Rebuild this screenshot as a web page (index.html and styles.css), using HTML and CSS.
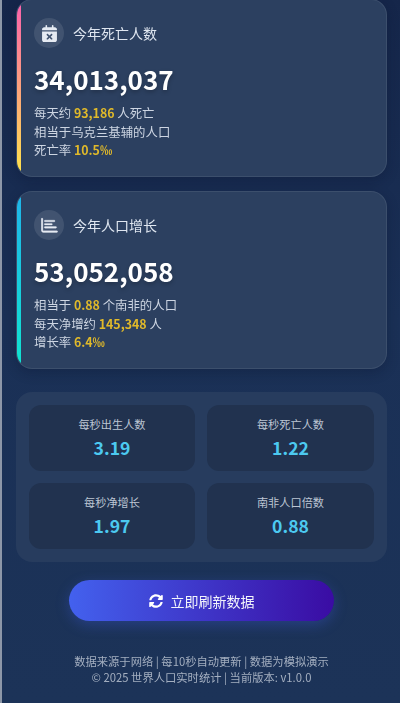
FILE: index.html
```html
<!DOCTYPE html>
<html lang="zh-CN">
<head>
<meta charset="utf-8">
<title>世界人口实时统计</title>
<link rel="stylesheet" href="styles.css">
</head>
<body>
<div class="edge"></div>
<main class="page">
  <section class="card card-death">
    <div class="card-head">
      <span class="icon-wrap">
        <svg class="icon" viewBox="0 0 448 512"><path d="M128 0c13 0 24 11 24 24v40h144V24c0-13 11-24 24-24s24 11 24 24v40h40c35 0 64 29 64 64v32H0v-32c0-35 29-64 64-64h40V24c0-13 11-24 24-24zM0 192h448v256c0 35-29 64-64 64H64c-35 0-64-29-64-64V192zm305 79c-9-9-25-9-34 0l-47 47-47-47c-9-9-25-9-34 0s-9 25 0 34l47 47-47 47c-9 9-9 25 0 34s25 9 34 0l47-47 47 47c9 9 25 9 34 0s9-25 0-34l-47-47 47-47c9-9 9-25 0-34z"/></svg>
      </span>
      <h2 class="card-title">今年死亡人数</h2>
    </div>
    <div class="big-number">34,013,037</div>
    <div class="details">
      <p>每天约 <b>93,186</b> 人死亡</p>
      <p>相当于乌克兰基辅的人口</p>
      <p>死亡率 <b>10.5‰</b></p>
    </div>
  </section>

  <section class="card card-growth">
    <div class="card-head">
      <span class="icon-wrap">
        <svg class="icon icon-chart" viewBox="0 0 512 512"><path d="M32 32c13 0 24 11 24 24v344c0 9 7 16 16 16h408c13 0 24 11 24 24s-11 24-24 24H72c-35 0-64-29-64-64V56c0-13 11-24 24-24zM120 96h280c13 0 24 11 24 24s-11 24-24 24H120c-13 0-24-11-24-24s11-24 24-24zm0 96h200c13 0 24 11 24 24s-11 24-24 24H120c-13 0-24-11-24-24s11-24 24-24zm0 96h328c13 0 24 11 24 24s-11 24-24 24H120c-13 0-24-11-24-24s11-24 24-24z"/></svg>
      </span>
      <h2 class="card-title">今年人口增长</h2>
    </div>
    <div class="big-number">53,052,058</div>
    <div class="details">
      <p>相当于 <b>0.88</b> 个南非的人口</p>
      <p>每天净增约 <b>145,348</b> 人</p>
      <p>增长率 <b>6.4‰</b></p>
    </div>
  </section>

  <section class="panel">
    <div class="stat"><div class="stat-label">每秒出生人数</div><div class="stat-value">3.19</div></div>
    <div class="stat"><div class="stat-label">每秒死亡人数</div><div class="stat-value">1.22</div></div>
    <div class="stat"><div class="stat-label">每秒净增长</div><div class="stat-value">1.97</div></div>
    <div class="stat"><div class="stat-label">南非人口倍数</div><div class="stat-value">0.88</div></div>
  </section>

  <div class="action">
    <button class="refresh" type="button">
      <svg class="refresh-icon" viewBox="0 0 512 512"><path d="M370.72 133.28C339.458 104.008 298.888 87.962 255.848 88c-77.458.068-144.328 53.178-162.791 126.85-1.344 5.363-6.122 9.15-11.651 9.15H24.103c-7.498 0-13.194-6.807-11.807-14.176C33.933 94.924 134.813 8 256 8c66.448 0 126.791 26.136 171.315 68.685L463.03 40.97C478.149 25.851 504 36.559 504 57.941V192c0 13.255-10.745 24-24 24H345.941c-21.382 0-32.09-25.851-16.971-40.971l41.75-41.749zM32 296h134.059c21.382 0 32.09 25.851 16.971 40.971l-41.75 41.75c31.262 29.273 71.835 45.319 114.876 45.28 77.418-.07 144.315-53.144 162.787-126.849 1.344-5.363 6.122-9.15 11.651-9.15h57.304c7.498 0 13.194 6.807 11.807 14.176C478.067 417.076 377.187 504 256 504c-66.448 0-126.791-26.136-171.315-68.685L48.97 471.03C33.851 486.149 8 475.441 8 454.059V320c0-13.255 10.745-24 24-24z"/></svg>
      <span>立即刷新数据</span>
    </button>
  </div>

  <footer class="footer">
    <p>数据来源于网络 | 每10秒自动更新 | 数据为模拟演示</p>
    <p>© 2025 世界人口实时统计 | 当前版本: v1.0.0</p>
  </footer>
</main>
</body>
</html>
```
FILE: styles.css
```css
* { box-sizing: border-box; margin: 0; padding: 0; }
html, body { height: 703px; overflow: hidden; }
body {
  position: relative;
  background: linear-gradient(180deg, #15264a 0%, #1a3056 45%, #1c3358 100%);
  font-family: "Noto Sans CJK SC", "Noto Sans", sans-serif;
  color: #fff;
}
.edge {
  position: absolute;
  left: 0; top: 0; bottom: 0;
  width: 1.5px;
  background: #8d97a8;
}
.page {
  padding: 0 13px 0 16px;
  margin-top: -1px;
  display: flex;
  flex-direction: column;
  filter: blur(0.4px);
}
.card {
  position: relative;
  height: 178px;
  padding: 18px 17px 0;
  border-radius: 16px;
  background: #2c4060;
  border: 1px solid rgba(255, 255, 255, 0.08);
  box-shadow: 0 4px 12px rgba(10, 20, 45, 0.3);
  overflow: hidden;
  margin-bottom: 14px;
}
.card::before {
  content: "";
  position: absolute;
  left: -1px; top: 0; bottom: 0;
  width: 5px;
}
.card-death::before { background: linear-gradient(180deg, #fb5fae, #ffe54a); }
.card-growth::before { background: linear-gradient(180deg, #1fb4ea, #10e4d0); }
.card-growth { margin-bottom: 23px; }
.card-head { display: flex; align-items: center; gap: 9px; }
.icon-wrap {
  width: 30px; height: 30px;
  border-radius: 50%;
  background: rgba(255, 255, 255, 0.1);
  display: flex; align-items: center; justify-content: center;
}
.icon { width: 15px; height: 17px; fill: #e6ebf3; }
.icon-chart { width: 17px; height: 17px; stroke: #e6ebf3; stroke-width: 10; }
.card-title { font-size: 14px; font-weight: 400; color: #dfe6f0; line-height: 30px; }
.big-number {
  margin-top: 13px;
  font-size: 26px;
  line-height: 36px;
  font-weight: 700;
  color: #fff;
  text-shadow: 0 2px 4px rgba(0, 0, 0, 0.25);
}
.details { margin-top: 7px; font-size: 12.4px; line-height: 18.5px; color: #cdd5e2; }
.details b { color: #e0b92a; font-weight: 700; }
.panel {
  display: grid;
  grid-template-columns: 166px 167px;
  gap: 12px;
  padding: 13px;
  height: 170px;
  border-radius: 16px;
  background: #273c5e;
}
.stat {
  background: #21324f;
  border-radius: 12px;
  text-align: center;
  padding-top: 10px;
}
.stat-label { font-size: 11.2px; line-height: 18px; color: #bcc5d3; }
.stat-value { margin-top: 3px; font-size: 17.6px; line-height: 24px; font-weight: 700; color: #4cc9f0; }
.action { display: flex; justify-content: center; margin-top: 18px; }
.refresh {
  width: 265px; height: 41px;
  border: 0;
  border-radius: 21px;
  background: linear-gradient(90deg, #4361ee, #3a0ca3);
  color: #f2f4fb;
  font: 400 14px "Noto Sans CJK SC", "Noto Sans", sans-serif;
  display: flex; align-items: center; justify-content: center; gap: 8px;
  box-shadow: 0 4px 14px rgba(67, 97, 238, 0.3);
}
.refresh-icon { width: 14px; height: 14px; fill: #fff; }
.footer {
  margin-top: 32px;
  text-align: center;
  font-size: 11.3px;
  line-height: 16px;
  color: #a4afc0;
}
```
